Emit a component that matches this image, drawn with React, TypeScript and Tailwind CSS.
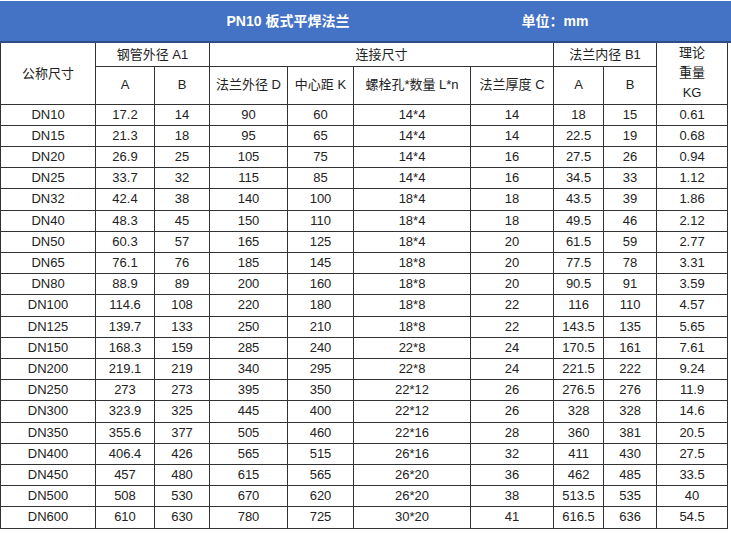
const rows: string[][] = [
  ['DN10', '17.2', '14', '90', '60', '14*4', '14', '18', '15', '0.61'],
  ['DN15', '21.3', '18', '95', '65', '14*4', '14', '22.5', '19', '0.68'],
  ['DN20', '26.9', '25', '105', '75', '14*4', '16', '27.5', '26', '0.94'],
  ['DN25', '33.7', '32', '115', '85', '14*4', '16', '34.5', '33', '1.12'],
  ['DN32', '42.4', '38', '140', '100', '18*4', '18', '43.5', '39', '1.86'],
  ['DN40', '48.3', '45', '150', '110', '18*4', '18', '49.5', '46', '2.12'],
  ['DN50', '60.3', '57', '165', '125', '18*4', '20', '61.5', '59', '2.77'],
  ['DN65', '76.1', '76', '185', '145', '18*8', '20', '77.5', '78', '3.31'],
  ['DN80', '88.9', '89', '200', '160', '18*8', '20', '90.5', '91', '3.59'],
  ['DN100', '114.6', '108', '220', '180', '18*8', '22', '116', '110', '4.57'],
  ['DN125', '139.7', '133', '250', '210', '18*8', '22', '143.5', '135', '5.65'],
  ['DN150', '168.3', '159', '285', '240', '22*8', '24', '170.5', '161', '7.61'],
  ['DN200', '219.1', '219', '340', '295', '22*8', '24', '221.5', '222', '9.24'],
  ['DN250', '273', '273', '395', '350', '22*12', '26', '276.5', '276', '11.9'],
  ['DN300', '323.9', '325', '445', '400', '22*12', '26', '328', '328', '14.6'],
  ['DN350', '355.6', '377', '505', '460', '22*16', '28', '360', '381', '20.5'],
  ['DN400', '406.4', '426', '565', '515', '26*16', '32', '411', '430', '27.5'],
  ['DN450', '457', '480', '615', '565', '26*20', '36', '462', '485', '33.5'],
  ['DN500', '508', '530', '670', '620', '26*20', '38', '513.5', '535', '40'],
  ['DN600', '610', '630', '780', '725', '30*20', '41', '616.5', '636', '54.5'],
];

const widths = [95, 59, 55, 78, 66, 117, 83, 50, 53, 71];

const cell = 'border border-[#333] text-center align-middle p-0';

export default function App() {
  return (
    <div
      className="w-[731px] h-[533px] bg-white text-[#222] overflow-hidden"
      style={{ fontFamily: '"Liberation Sans", "Noto Sans CJK SC", sans-serif' }}
    >
      {/* title bar */}
      <div className="h-[42px] mt-px bg-[#4472c4] border-b-2 border-[#2c4d86] flex items-center text-white font-bold text-[14px]">
        <div className="ml-[168px] w-[240px] text-center">PN10 板式平焊法兰</div>
        <div className="ml-[87px] w-[120px] text-center">单位：mm</div>
      </div>

      <table className="w-[727px] border-collapse table-fixed text-[13px]">
        <colgroup>
          {widths.map((w, i) => (
            <col key={i} style={{ width: w }} />
          ))}
        </colgroup>
        <thead>
          <tr className="h-[23px]">
            <th rowSpan={2} className={`${cell} font-normal border-t-0`}>公称尺寸</th>
            <th colSpan={2} className={`${cell} font-normal border-t-0`}>钢管外径 A1</th>
            <th colSpan={4} className={`${cell} font-normal border-t-0`}>连接尺寸</th>
            <th colSpan={2} className={`${cell} font-normal border-t-0`}>法兰内径 B1</th>
            <th rowSpan={2} className={`${cell} font-normal border-t-0 leading-[20px]`}>
              理论
              <br />
              重量
              <br />
              KG
            </th>
          </tr>
          <tr className="h-[38px]">
            <th className={`${cell} font-normal`}>A</th>
            <th className={`${cell} font-normal`}>B</th>
            <th className={`${cell} font-normal`}>法兰外径 D</th>
            <th className={`${cell} font-normal`}>中心距 K</th>
            <th className={`${cell} font-normal`}>螺栓孔*数量 L*n</th>
            <th className={`${cell} font-normal`}>法兰厚度 C</th>
            <th className={`${cell} font-normal`}>A</th>
            <th className={`${cell} font-normal`}>B</th>
          </tr>
        </thead>
        <tbody>
          {rows.map((r, i) => (
            <tr key={r[0]} className={i % 5 === 4 ? 'h-[22px]' : 'h-[21px]'}>
              {r.map((v, j) => (
                <td key={j} className={cell}>
                  {v}
                </td>
              ))}
            </tr>
          ))}
        </tbody>
      </table>
    </div>
  );
}
